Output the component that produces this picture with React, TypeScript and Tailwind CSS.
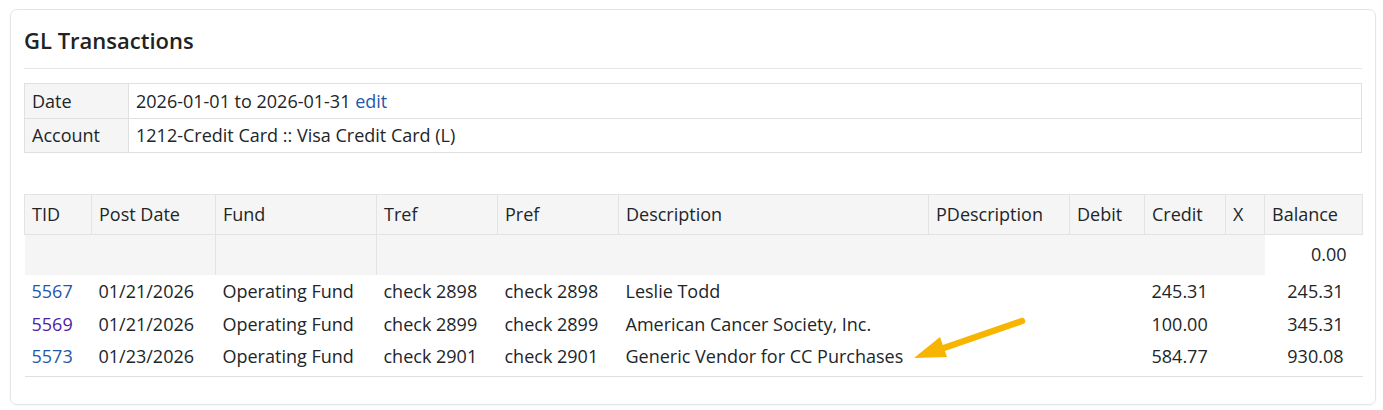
import React from "react";

const cols = [67, 124, 161, 121, 121, 310, 141, 75, 81, 39, 98];

const headers = [
  "TID",
  "Post Date",
  "Fund",
  "Tref",
  "Pref",
  "Description",
  "PDescription",
  "Debit",
  "Credit",
  "X",
  "Balance",
];

const rows = [
  { tid: "5567", visited: false, date: "01/21/2026", ref: "check 2898", desc: "Leslie Todd", credit: "245.31", bal: "245.31" },
  { tid: "5569", visited: true, date: "01/21/2026", ref: "check 2899", desc: "American Cancer Society, Inc.", credit: "100.00", bal: "345.31" },
  { tid: "5573", visited: false, date: "01/23/2026", ref: "check 2901", desc: "Generic Vendor for CC Purchases", credit: "584.77", bal: "930.08" },
];

const App = () => {
  return (
    <div
      className="relative w-[1383px] h-[410px] bg-white text-[#212529] text-[18px]"
      style={{ fontFamily: '"Open Sans", "Noto Sans", sans-serif' }}
    >
      <div className="absolute left-[10px] top-[9px] w-[1366px] h-[396px] rounded-[7px] border border-[#e2e6eb] bg-white shadow-[0_1px_3px_rgba(0,0,0,0.04)] px-[13px] pt-[15px]">
        <h1 className="text-[22px] font-semibold leading-[30px] text-[#222] pb-[13px] border-b border-[#e3e7ec]">
          GL Transactions
        </h1>

        <table className="mt-[14px] w-[1338px] table-fixed border-collapse border border-[#e0e0e0]">
          <colgroup>
            <col className="w-[104px]" />
            <col />
          </colgroup>
          <tbody>
            <tr className="h-[35px]">
              <td className="bg-[#f5f5f5] border border-[#e0e0e0] px-[7px]">Date</td>
              <td className="border border-[#e0e0e0] px-[7px]">
                2026-01-01 to 2026-01-31{" "}
                <a className="text-[#1f58a8]">edit</a>
              </td>
            </tr>
            <tr className="h-[34px]">
              <td className="bg-[#f5f5f5] border border-[#e0e0e0] px-[7px]">Account</td>
              <td className="border border-[#e0e0e0] px-[7px]">1212-Credit Card :: Visa Credit Card (L)</td>
            </tr>
          </tbody>
        </table>

        <table className="mt-[41px] w-[1338px] table-fixed border-collapse">
          <colgroup>
            {cols.map((w, i) => (
              <col key={i} style={{ width: w }} />
            ))}
          </colgroup>
          <thead>
            <tr className="h-[40px] bg-[#f5f5f5]">
              {headers.map((h) => (
                <th
                  key={h}
                  className="border border-[#e3e3e3] px-[7px] text-left font-normal whitespace-nowrap"
                >
                  {h}
                </th>
              ))}
            </tr>
          </thead>
          <tbody>
            <tr className="h-[40px]">
              <td colSpan={2} className="bg-[#f5f5f5] border-r border-[#e3e3e3]"></td>
              <td className="bg-[#f5f5f5] border-r border-[#e3e3e3]"></td>
              <td colSpan={7} className="bg-[#f5f5f5]"></td>
              <td className="text-right pl-[7px] pr-[16px]">0.00</td>
            </tr>
            {rows.map((r, i) => {
              const last = i === rows.length - 1;
              const cell = "px-[7px] whitespace-nowrap" + (last ? " pb-[3px]" : "");
              return (
                <tr
                  key={r.tid}
                  className={last ? "h-[36px] border-b border-[#e0e0e0]" : "h-[33px]"}
                >
                  <td className={cell}>
                    <a className={r.visited ? "text-[#5020a8]" : "text-[#1f58a8]"}>{r.tid}</a>
                  </td>
                  <td className={cell}>{r.date}</td>
                  <td className={cell}>Operating Fund</td>
                  <td className={cell}>{r.ref}</td>
                  <td className={cell}>{r.ref}</td>
                  <td className={cell}>{r.desc}</td>
                  <td className={cell}></td>
                  <td className={cell}></td>
                  <td className={cell}>{r.credit}</td>
                  <td className={cell}></td>
                  <td className={cell + " text-right pr-[19px]"}>{r.bal}</td>
                </tr>
              );
            })}
          </tbody>
        </table>
      </div>

      <svg
        className="absolute left-0 top-0 pointer-events-none"
        width="1383"
        height="410"
        viewBox="0 0 1383 410"
      >
        <line x1="1022" y1="321" x2="938" y2="350" stroke="#f7b500" strokeWidth="6.5" strokeLinecap="round" />
        <polygon points="914,358 940,337 947,357" fill="#f7b500" />
      </svg>
    </div>
  );
};

export default App;
